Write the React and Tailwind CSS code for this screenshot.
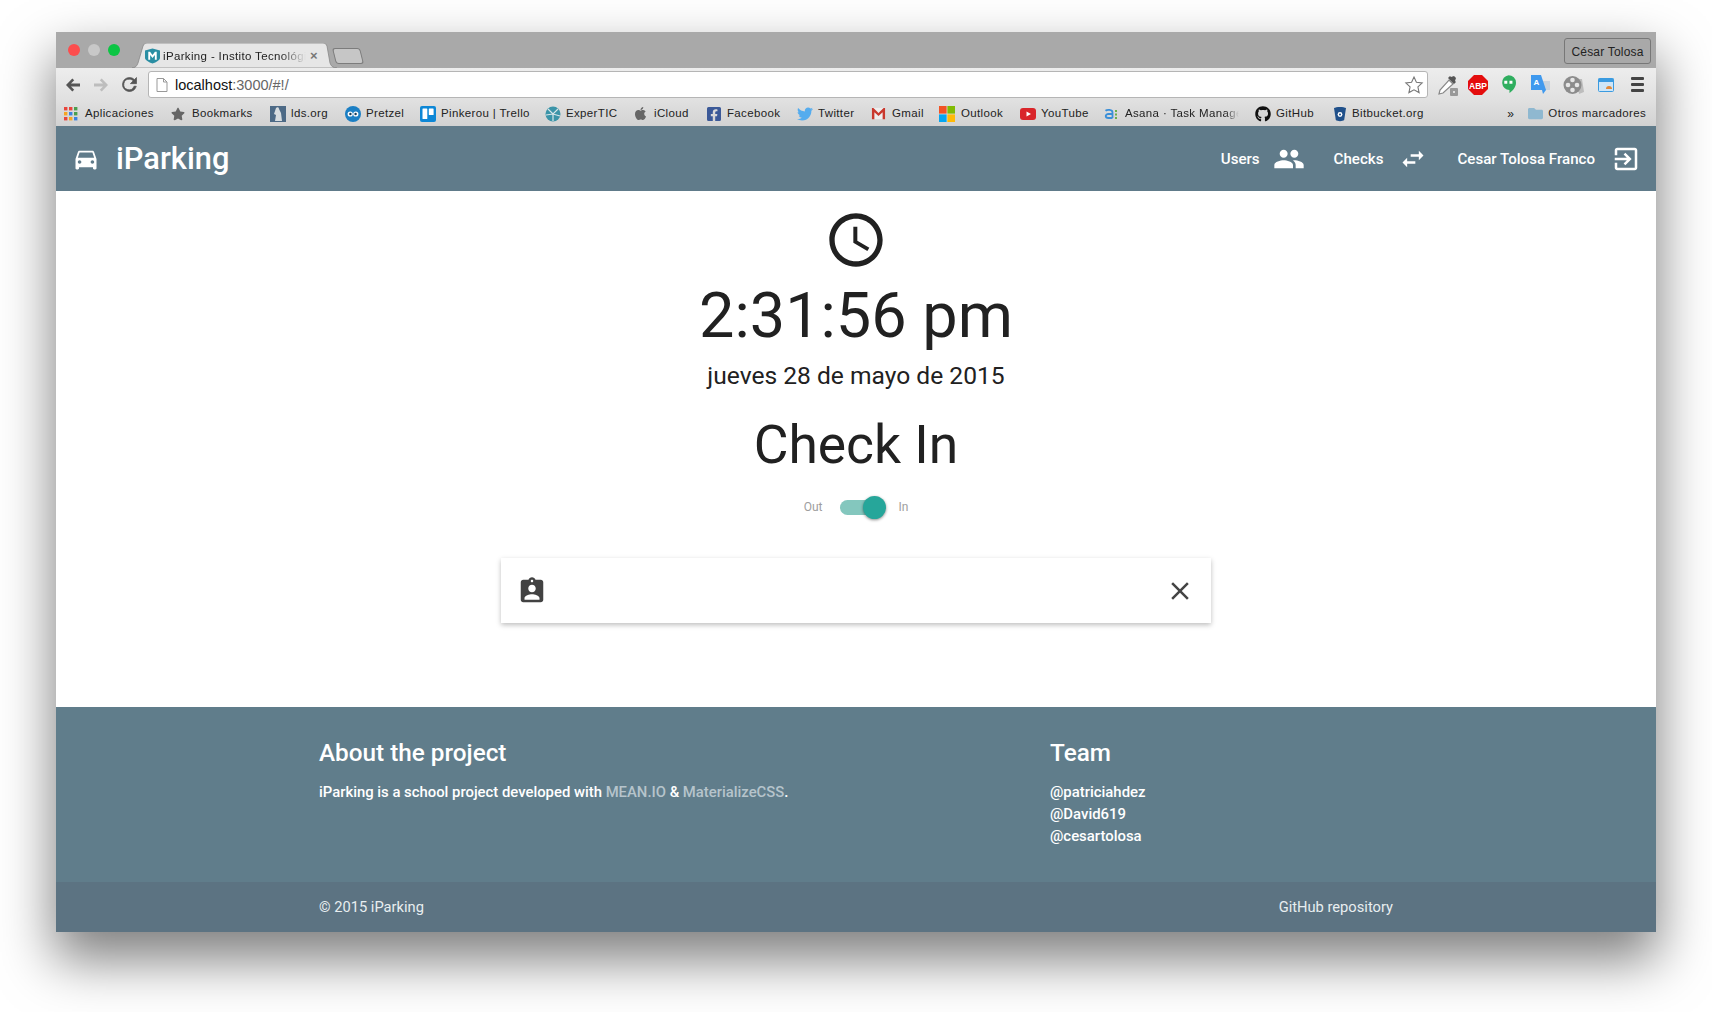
import React from "react";
import { FaApple, FaTwitter, FaFacebookSquare, FaGithub, FaStar, FaFolder } from "react-icons/fa";

const P = {
  car: "M18.92 6.01C18.72 5.42 18.16 5 17.5 5h-11c-.66 0-1.21.42-1.42 1.01L3 12v8c0 .55.45 1 1 1h1c.55 0 1-.45 1-1v-1h12v1c0 .55.45 1 1 1h1c.55 0 1-.45 1-1v-8l-2.08-5.99zM6.5 16c-.83 0-1.5-.67-1.5-1.5S5.67 13 6.5 13s1.5.67 1.5 1.5S7.33 16 6.5 16zm11 0c-.83 0-1.5-.67-1.5-1.5s.67-1.5 1.5-1.5 1.5.67 1.5 1.5-.67 1.5-1.5 1.5zM5 11l1.5-4.5h11L19 11H5z",
  people: "M16 11c1.66 0 2.99-1.34 2.99-3S17.66 5 16 5c-1.66 0-3 1.34-3 3s1.34 3 3 3zm-8 0c1.66 0 2.99-1.34 2.99-3S9.66 5 8 5C6.34 5 5 6.34 5 8s1.34 3 3 3zm0 2c-2.33 0-7 1.17-7 3.5V19h14v-2.5c0-2.33-4.67-3.5-7-3.5zm8 0c-.29 0-.62.02-.97.05 1.16.84 1.97 1.97 1.97 3.45V19h6v-2.5c0-2.33-4.67-3.5-7-3.5z",
  swap: "M6.99 11L3 15l3.99 4v-3H14v-2H6.99v-3zM21 9l-4-4v3h-7v2h7v3l4-4z",
  exit: "M10.09 15.59L11.5 17l5-5-5-5-1.41 1.41L12.67 11H3v2h9.67l-2.58 2.59zM19 3H5c-1.11 0-2 .9-2 2v4h2V5h14v14H5v-4H3v4c0 1.1.89 2 2 2h14c1.1 0 2-.9 2-2V5c0-1.1-.9-2-2-2z",
  clock: "M11.99 2C6.47 2 2 6.48 2 12s4.47 10 9.99 10C17.52 22 22 17.52 22 12S17.52 2 11.99 2zM12 20c-4.42 0-8-3.58-8-8s3.58-8 8-8 8 3.58 8 8-3.58 8-8 8zm.5-13H11v6l5.25 3.15.75-1.23-4.5-2.67z",
  badge: "M19 3h-4.18C14.4 1.84 13.3 1 12 1c-1.3 0-2.4.84-2.82 2H5c-1.1 0-2 .9-2 2v14c0 1.1.9 2 2 2h14c1.1 0 2-.9 2-2V5c0-1.1-.9-2-2-2zm-7 0c.55 0 1 .45 1 1s-.45 1-1 1-1-.45-1-1 .45-1 1-1zm0 4c1.66 0 3 1.34 3 3s-1.34 3-3 3-3-1.34-3-3 1.34-3 3-3zm6 12H6v-1.4c0-2 4-3.1 6-3.1s6 1.1 6 3.1V19z",
  close: "M19 6.41L17.59 5 12 10.59 6.41 5 5 6.41 10.59 12 5 17.59 6.41 19 12 13.41 17.59 19 19 17.59 13.41 12z",
};

function Md({ d, className }) {
  return (
    <svg viewBox="0 0 24 24" className={className} fill="currentColor">
      <path d={d} />
    </svg>
  );
}

function Shield({ className }) {
  return (
    <svg viewBox="0 0 16 16" className={className}>
      <path d="M0 2 8 0l8 2v8c0 2-4 4.500-8 6-4-1.500-8-4-8-6z" fill="#2a8ea3" />
      <path d="M3.500 12V3.500h1.900L8 7l2.600-3.500h1.900V12h-2V7L8 10.200 5.500 7v5z" fill="#fff" />
    </svg>
  );
}

const AppsIcon = () => (
  <svg viewBox="0 0 14 14" className="w-[14px] h-[14px]">
    {[
      ["#e8453c", "#e8453c", "#4a9f4e"],
      ["#f5a623", "#3b82e0", "#4a9f4e"],
      ["#e8453c", "#f5a623", "#3b82e0"],
    ].map((r, y) =>
      r.map((c, x) => <rect key={`${x}${y}`} x={x * 5} y={y * 5} width="3.4" height="3.4" fill={c} />)
    )}
  </svg>
);

const Lds = () => (
  <svg viewBox="0 0 16 16" className="w-4 h-4">
    <rect width="16" height="16" fill="#4d6a86" />
    <path d="M6 2c1-1 3-1 3 1l2 4 1 8H5l1-6-2-1z" fill="#d8dde0" />
  </svg>
);
const Pretzel = () => (
  <svg viewBox="0 0 16 16" className="w-4 h-4">
    <circle cx="8" cy="8" r="8" fill="#1b7fc4" />
    <circle cx="5.2" cy="8" r="2.6" fill="#fff" />
    <circle cx="10.8" cy="8" r="2.6" fill="#fff" />
    <circle cx="5.4" cy="8" r="1.2" fill="#143d5c" />
    <circle cx="10.6" cy="8" r="1.2" fill="#143d5c" />
  </svg>
);
const Trello = () => (
  <svg viewBox="0 0 16 16" className="w-4 h-4">
    <rect width="16" height="16" rx="2" fill="#0d87d6" />
    <rect x="2.5" y="2.5" width="4.8" height="10.5" rx=".6" fill="#fff" />
    <rect x="8.8" y="2.5" width="4.8" height="6.5" rx=".6" fill="#fff" />
  </svg>
);
const Exper = () => (
  <svg viewBox="0 0 16 16" className="w-4 h-4">
    <circle cx="8" cy="8" r="7.5" fill="#3b94a8" />
    <path d="M3 3l5 5 5-5M8 8v7M1 9l7-1 7 2" stroke="#d8e6ea" strokeWidth="1.2" fill="none" />
  </svg>
);
const Gmail = () => (
  <svg viewBox="0 0 16 16" className="w-[15px] h-[15px]">
    <rect x="1" y="2" width="14" height="12" fill="#eeeeee" />
    <path d="M1 14V2h1.6L8 7.4 13.4 2H15v12h-2.6V6.6L8 10.6 3.6 6.6V14z" fill="#c9382d" />
  </svg>
);
const Ms = () => (
  <svg viewBox="0 0 16 16" className="w-4 h-4">
    <rect width="7.6" height="7.6" fill="#f25325" />
    <rect x="8.4" width="7.6" height="7.6" fill="#80bb03" />
    <rect y="8.4" width="7.6" height="7.6" fill="#05a6f0" />
    <rect x="8.4" y="8.4" width="7.6" height="7.6" fill="#ffba07" />
  </svg>
);
const Yt = () => (
  <svg viewBox="0 0 16 16" className="w-4 h-4">
    <rect y="2" width="16" height="12" rx="3" fill="#d9252a" />
    <path d="M6.5 5.5 11 8l-4.500 2.500z" fill="#fff" />
  </svg>
);
const Asana = () => (
  <svg viewBox="0 0 16 16" className="w-4 h-4">
    <path d="M1.500 4.800C3 3.500 8.500 3.300 8.500 6.500V12M8.500 8H4.500C.8 8 .8 12 4.500 12H8.500" fill="none" stroke="#3a8fd8" strokeWidth="1.800" />
    <rect x="11" y="4" width="2" height="2" fill="#6ab04c" />
    <rect x="11" y="7.500" width="2" height="2" fill="#6ab04c" />
    <rect x="11" y="11" width="2" height="2" fill="#6ab04c" />
  </svg>
);
const Bit = () => (
  <svg viewBox="0 0 16 16" className="w-4 h-4">
    <path d="M2 2c2-1.500 10-1.500 12 0l-1.800 12c-1.500 1.500-6.900 1.500-8.400 0z" fill="#20508a" />
    <circle cx="8" cy="8.500" r="2.400" fill="#fff" />
    <circle cx="8" cy="8.500" r="1" fill="#20508a" />
  </svg>
);

const bookmarks = [
  { label: "Aplicaciones", icon: <AppsIcon />, w: "w-[107px]", g: "gap-[7px]" },
  { label: "Bookmarks", icon: <FaStar className="w-[14px] h-[14px] text-[#666]" />, w: "w-[99px]", g: "gap-[7px]" },
  { label: "lds.org", icon: <Lds />, w: "w-[75px]", g: "gap-[5px]" },
  { label: "Pretzel", icon: <Pretzel />, w: "w-[75px]", g: "gap-[5px]" },
  { label: "Pinkerou | Trello", icon: <Trello />, w: "w-[125px]", g: "gap-[5px]" },
  { label: "ExperTIC", icon: <Exper />, w: "w-[88px]", g: "gap-[5px]" },
  { label: "iCloud", icon: <FaApple className="w-[15px] h-[15px] text-[#666]" />, w: "w-[73px]", g: "gap-[6px]" },
  { label: "Facebook", icon: <FaFacebookSquare className="w-4 h-4 text-[#3b5998]" />, w: "w-[91px]", g: "gap-[5px]" },
  { label: "Twitter", icon: <FaTwitter className="w-4 h-4 text-[#55acee]" />, w: "w-[74px]", g: "gap-[5px]" },
  { label: "Gmail", icon: <Gmail />, w: "w-[68px]", g: "gap-[6px]" },
  { label: "Outlook", icon: <Ms />, w: "w-[81px]", g: "gap-[6px]" },
  { label: "YouTube", icon: <Yt />, w: "w-[84px]", g: "gap-[5px]" },
  { label: "Asana · Task Manage", icon: <Asana />, w: "w-[151px]", g: "gap-[5px]", fade: true },
  { label: "GitHub", icon: <FaGithub className="w-4 h-4 text-[#111]" />, w: "w-[77px]", g: "gap-[5px]" },
  { label: "Bitbucket.org", icon: <Bit />, w: "w-[108px]", g: "gap-[4px]" },
];

function Ext() {
  return (
    <div className="flex items-center w-[224px] h-full pl-[3px] text-[#555]">
      <div className="w-[32px] flex justify-center">
        <svg viewBox="0 0 24 24" className="w-[24px] h-[24px]">
          <path d="M4 21l1-4L14 7l4 4-10 9z" fill="#fff" stroke="#888" strokeWidth="1.200" />
          <path d="M13 5l6 6 2-2-1-1 1-3-2-2-3 1-1-1z" fill="#555" />
          <rect x="15" y="15" width="8" height="8" rx="1" fill="#999" />
          <rect x="18" y="18" width="2" height="2" fill="#ddd" />
        </svg>
      </div>
      <div className="w-[31px] flex justify-center">
        <svg viewBox="0 0 20 20" className="w-[20px] h-[20px]">
          <path d="M6 0h8l6 6v8l-6 6H6l-6-6V6z" fill="#e40d0d" />
          <text x="10" y="13.500" textAnchor="middle" fontSize="8.500" fontWeight="700" fill="#fff" fontFamily="Liberation Sans">ABP</text>
        </svg>
      </div>
      <div className="w-[31px] flex justify-center">
        <svg viewBox="0 0 16 20" className="w-[15px] h-[19px]">
          <path d="M8 0a8 8 0 0 1 8 8c0 5-4 9-7 11v-3.100A8 8 0 0 1 8 0z" fill="#2fae5f" />
          <rect x="3.500" y="6" width="3.200" height="3.200" fill="#fff" />
          <rect x="9" y="6" width="3.200" height="3.200" fill="#fff" />
        </svg>
      </div>
      <div className="w-[33px] flex justify-center">
        <svg viewBox="0 0 20 20" className="w-[20px] h-[20px]">
          <path d="M10 6h9v9h-7z" fill="#c9d3dc" />
          <path d="M0 0h10l5 15-3 4-1-4H0z" fill="#3f99ee" />
          <text x="5.500" y="10" textAnchor="middle" fontSize="8" fontWeight="700" fill="#fff" fontFamily="Liberation Sans">A</text>
        </svg>
      </div>
      <div className="w-[34px] flex justify-center">
        <svg viewBox="0 0 22 20" className="w-[22px] h-[20px]">
          <path d="M14 4h5l2 13-5 2z" fill="#bdbdbd" />
          <circle cx="9.500" cy="10" r="9" fill="#8c8c8c" />
          <circle cx="9.500" cy="5" r="2.300" fill="#e6e6e6" />
          <circle cx="5" cy="10" r="2.300" fill="#e6e6e6" />
          <circle cx="14" cy="10" r="2.300" fill="#e6e6e6" />
          <circle cx="9.500" cy="15" r="2.300" fill="#e6e6e6" />
        </svg>
      </div>
      <div className="w-[32px] flex justify-center">
        <svg viewBox="0 0 16 14" className="w-[16px] h-[14px]">
          <rect x=".5" y=".5" width="15" height="13" rx="1" fill="#cfe6f7" stroke="#3b9be0" />
          <rect x=".5" y=".5" width="15" height="3.500" fill="#3b9be0" />
          <path d="M8 11a3 3 0 0 1 6 0z" fill="#e2893a" />
        </svg>
      </div>
      <div className="w-[30px] flex justify-center">
        <div className="w-[13px] flex flex-col gap-[3px]">
          <div className="h-[3px] bg-[#444] rounded-[1px]" />
          <div className="h-[3px] bg-[#444] rounded-[1px]" />
          <div className="h-[3px] bg-[#444] rounded-[1px]" />
        </div>
      </div>
    </div>
  );
}

export default function App() {
  return (
    <div className="w-[1712px] h-[1012px] bg-white pt-[32px] px-[56px] overflow-hidden font-['Roboto',sans-serif]">
      <div className="w-[1600px] h-[900px] flex flex-col shadow-[0_26px_50px_2px_rgba(0,0,0,0.5)]">
        {/* Tab strip */}
        <div className="h-[36px] bg-[#a9a9a9] flex items-end relative shrink-0 pl-[12px] font-['Liberation_Sans',sans-serif]">
          <div className="flex gap-2 items-center h-full w-[64px] pl-0">
            <div className="w-3 h-3 rounded-full bg-[#fc4d4d]" />
            <div className="w-3 h-3 rounded-full bg-[#c8c8c8]" />
            <div className="w-3 h-3 rounded-full bg-[#0cc544]" />
          </div>
          <div className="relative w-[205px] h-[25px] flex items-center pl-[12px]">
            <svg viewBox="0 0 205 25" className="absolute inset-0 w-full h-full" preserveAspectRatio="none">
              <path d="M0 25c3 0 5-2 6-5L11 3c1-2 2-3 4-3h176c2 0 3 1 4 3l3 17c1 3 3 5 7 5z" fill="#e6e6e6" stroke="#888" strokeWidth=".8" />
            </svg>
            <Shield className="relative w-[15px] h-4 mr-[3px] ml-[1px]" />
            <span className="relative pt-[2px] text-[11.500px] text-[#222] w-[143px] whitespace-nowrap tracking-[0.35px] [mask-image:linear-gradient(to_right,black_82%,transparent)]">iParking - Instito Tecnológi</span>
            <span className="relative text-[13px] text-[#777] ml-[4px] font-bold leading-none">×</span>
          </div>
          <div className="w-[28px] h-[16px] mb-[4px] -ml-[3px] bg-[#c6c6c6] border border-[#7c7c7c] rounded-[3px] [transform:skewX(14deg)]" />
          <div className="absolute right-[5px] top-[6px] h-[26px] w-[87px] border border-[#777] rounded-[3px] flex items-center justify-center pt-[1px] text-[12px] text-[#222] tracking-[0.2px]">César Tolosa</div>
        </div>

        {/* Toolbar */}
        <div className="h-[33px] shrink-0 flex items-center bg-gradient-to-b from-[#ededed] to-[#e0e0e0] pl-[8px] font-['Liberation_Sans',sans-serif]">
          <div className="w-[84px] flex items-center text-[#555]">
            <svg viewBox="0 0 18 18" className="w-[18px] h-[18px] mr-[10px]"><path d="M16 7.500H7l3.200-3.200L8.300 2.500 2 9l6.300 6.500 1.900-1.800L7 10.500h9z" fill="#555" /></svg>
            <svg viewBox="0 0 18 18" className="w-[18px] h-[18px] mr-[9px]"><path d="M2 7.500h9L7.800 4.300l1.900-1.800L16 9l-6.300 6.500-1.900-1.800 3.200-3.200H2z" fill="#bdbdbd" /></svg>
            <svg viewBox="0 0 24 24" className="w-[21px] h-[21px]"><path fill="#555" stroke="#555" strokeWidth=".8" d="M17.650 6.350A7.960 7.960 0 0 0 12 4a8 8 0 1 0 7.740 10h-2.600A6 6 0 1 1 12 6c1.660 0 3.140.69 4.220 1.780L13 11h7V4z" /></svg>
          </div>
          <div className="w-[1280px] h-[27px] bg-white border border-[#b5b5b5] rounded-[3px] flex items-center pl-[7px] relative">
            <svg viewBox="0 0 12 14" className="w-[12px] h-[14px] mr-[7px]"><path d="M1 .500h6.500L11 4v9.500H1z" fill="#fff" stroke="#999" /><path d="M7.500 .500V4H11" fill="none" stroke="#999" /></svg>
            <span className="pt-[3px] text-[14.500px] text-[#111]">localhost<span className="text-[#666]">:3000/#!/</span></span>
            <svg viewBox="0 0 24 24" className="absolute right-[3px] top-[3px] w-[20px] h-[20px]"><path d="M12 2.500l2.900 6.300 6.900.8-5.100 4.700 1.400 6.800L12 17.700l-6.100 3.400 1.400-6.800L2.200 9.600l6.900-.8z" fill="#fff" stroke="#777" strokeWidth="1.300" /></svg>
          </div>
          <Ext />
        </div>

        {/* Bookmarks */}
        <div className="h-[25px] shrink-0 flex items-center bg-gradient-to-b from-[#e0e0e0] to-[#d2d2d2] pl-[8px] text-[11.500px] text-[#222] tracking-[0.35px] font-['Liberation_Sans',sans-serif] relative">
          {bookmarks.map((b) => (
            <div key={b.label} className={`flex items-center shrink-0 ${b.w} ${b.g}`}>
              {b.icon}
              {b.fade ? (
                <span className="whitespace-nowrap w-[114px] [mask-image:linear-gradient(to_right,black_88%,transparent)]">{b.label}</span>
              ) : (
                <span className="whitespace-nowrap">{b.label}</span>
              )}
            </div>
          ))}
          <div className="ml-auto flex items-center pr-[10px]">
            <span className="text-[12px] mr-[13px]">»</span>
            <FaFolder className="w-[17px] h-[15px] text-[#8fb8d0] mr-[4px]" />
            <span>Otros marcadores</span>
          </div>
        </div>

        {/* Navbar */}
        <div className="h-[65px] shrink-0 bg-[#607b8a] text-white flex items-center pl-[16px] pr-[15px]">
          <Md d={P.car} className="w-[28px] h-[28px] mr-[16px]" />
          <span className="pt-[2px] text-[30.800px] font-medium leading-none">iParking</span>
          <div className="ml-auto flex items-center text-[15.100px] font-medium">
            <span className="pt-[2px]">Users</span>
            <Md d={P.people} className="w-[32px] h-[32px] ml-[13px] mr-[29px]" />
            <span className="pt-[2px]">Checks</span>
            <Md d={P.swap} className="w-[28px] h-[28px] ml-[16px] mr-[30px]" />
            <span className="pt-[2px]">Cesar Tolosa Franco</span>
            <Md d={P.exit} className="w-[30px] h-[30px] ml-[16px]" />
          </div>
        </div>

        {/* Main */}
        <div className="h-[516px] shrink-0 bg-white flex flex-col items-center text-[#212121]">
          <Md d={P.clock} className="w-[64px] h-[64px] mt-[17px]" />
          <div className="text-[63px] leading-[70px] mt-[9px]">2:31:56 pm</div>
          <div className="text-[24.600px] leading-[30px] mt-[10px]">jueves 28 de mayo de 2015</div>
          <div className="text-[53.400px] leading-[64px] mt-[22px]">Check In</div>
          <div className="flex items-center mt-[18px] text-[12px] text-[#9e9e9e] h-[24px]">
            <span>Out</span>
            <div className="relative w-[44px] h-[15px] rounded-full bg-[#84c7be] ml-[18px] mr-[14px]">
              <div className="absolute right-[-2px] top-[-4px] w-[23px] h-[23px] rounded-full bg-[#26a69a] shadow-[0_1px_3px_rgba(0,0,0,0.45)]" />
            </div>
            <span>In</span>
          </div>
          <div className="w-[710px] h-[65px] mt-[39px] bg-white shadow-[0_2px_5px_rgba(0,0,0,0.26)] flex items-center justify-between pl-[16px] pr-[16px] text-[#424242]">
            <Md d={P.badge} className="w-[30px] h-[30px]" />
            <Md d={P.close} className="w-[30px] h-[30px] text-[#444]" />
          </div>
        </div>

        {/* Footer */}
        <div className="h-[175px] shrink-0 bg-[#607d8b] text-white">
          <div className="w-[1074px] mx-auto flex pt-[30px]">
            <div className="w-[731px]">
              <h3 className="text-[24.300px] font-medium leading-[30px] pt-[1px]">About the project</h3>
              <p className="text-[14.850px] font-medium leading-[22px] mt-[13px]">
                iParking is a school project developed with <span className="text-[#b6c4cb]">MEAN.IO</span> & <span className="text-[#b6c4cb]">MaterializeCSS</span>.
              </p>
            </div>
            <div>
              <h3 className="text-[24.300px] font-medium leading-[30px] pt-[1px]">Team</h3>
              <div className="text-[14.900px] font-medium leading-[22px] mt-[13px]">
                <div>@patriciahdez</div>
                <div>@David619</div>
                <div>@cesartolosa</div>
              </div>
            </div>
          </div>
        </div>
        <div className="h-[50px] shrink-0 bg-[#5c7382] text-[#e8eef0] text-[14.700px]">
          <div className="w-[1074px] h-full mx-auto flex items-center justify-between">
            <span>© 2015 iParking</span>
            <span>GitHub repository</span>
          </div>
        </div>
      </div>
    </div>
  );
}
